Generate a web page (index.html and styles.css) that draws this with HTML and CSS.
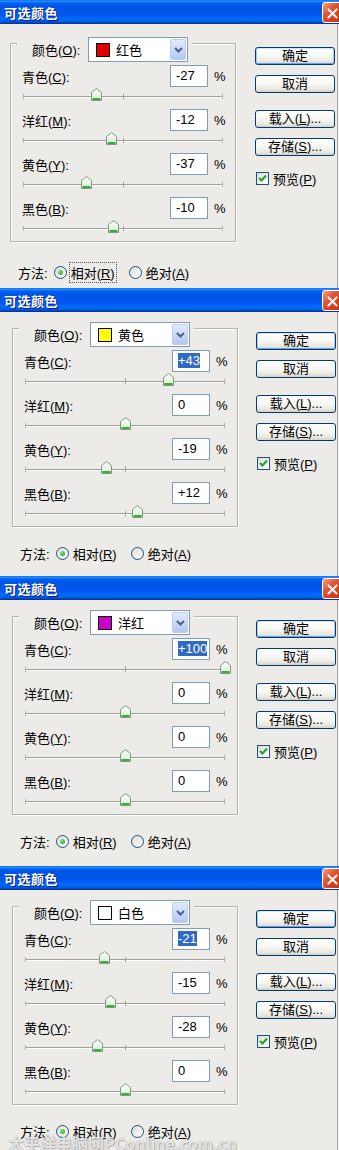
FILE: index.html
```html
<!DOCTYPE html>
<html lang="zh-CN">
<head>
<meta charset="utf-8">
<title>可选颜色</title>
<link rel="stylesheet" href="styles.css">
</head>
<body>
<div class="page">

<section class="dlg dlg-1">
  <div class="titlebar"><span class="title">可选颜色</span><span class="close"><svg width="21" height="21" viewBox="0 0 21 21"><path d="M6 6 L15 15 M15 6 L6 15" stroke="#fff" stroke-width="2.2" stroke-linecap="round"/></svg></span></div>
  <div class="body">
    <div class="left">
      <div class="group">
        <div class="group-head"><span class="head-lbl">颜色(<u>O</u>):</span><div class="select"><span class="swatch swatch-red"></span><span class="sel-text">红色</span><span class="sel-btn"><svg width="9" height="6" viewBox="0 0 9 6"><path d="M1 1 L4.5 4.5 L8 1" fill="none" stroke="#4D6185" stroke-width="2"/></svg></span></div></div>
        <div class="row"><div class="row-top"><span class="lbl">青色(<u>C</u>):</span><span class="num">-27</span><span class="pct">%</span></div><div class="slider"><span class="thumb" style="left:73px"><svg width="11" height="13" viewBox="0 0 11 13"><defs><linearGradient id="tg1" x1="0" y1="0" x2="0" y2="1"><stop offset="0" stop-color="#fff"/><stop offset="1" stop-color="#D5EDD0"/></linearGradient></defs><path d="M0.5 4.5 L5.5 0.5 L10.5 4.5 V12.5 H0.5 Z" fill="url(#tg1)" stroke="#7E9A7E"/><path d="M1.5 11 H9.5" stroke="#3DAA3D" stroke-width="2"/></svg></span></div></div>
        <div class="row"><div class="row-top"><span class="lbl">洋红(<u>M</u>):</span><span class="num">-12</span><span class="pct">%</span></div><div class="slider"><span class="thumb" style="left:88px"><svg width="11" height="13" viewBox="0 0 11 13"><path d="M0.5 4.5 L5.5 0.5 L10.5 4.5 V12.5 H0.5 Z" fill="url(#tg1)" stroke="#7E9A7E"/><path d="M1.5 11 H9.5" stroke="#3DAA3D" stroke-width="2"/></svg></span></div></div>
        <div class="row"><div class="row-top"><span class="lbl">黄色(<u>Y</u>):</span><span class="num">-37</span><span class="pct">%</span></div><div class="slider"><span class="thumb" style="left:63px"><svg width="11" height="13" viewBox="0 0 11 13"><path d="M0.5 4.5 L5.5 0.5 L10.5 4.5 V12.5 H0.5 Z" fill="url(#tg1)" stroke="#7E9A7E"/><path d="M1.5 11 H9.5" stroke="#3DAA3D" stroke-width="2"/></svg></span></div></div>
        <div class="row"><div class="row-top"><span class="lbl">黑色(<u>B</u>):</span><span class="num">-10</span><span class="pct">%</span></div><div class="slider"><span class="thumb" style="left:90px"><svg width="11" height="13" viewBox="0 0 11 13"><path d="M0.5 4.5 L5.5 0.5 L10.5 4.5 V12.5 H0.5 Z" fill="url(#tg1)" stroke="#7E9A7E"/><path d="M1.5 11 H9.5" stroke="#3DAA3D" stroke-width="2"/></svg></span></div></div>
      </div>
      <div class="method"><span class="method-lbl">方法:</span><span class="radio on"></span><span class="radio-text focus">相对(<u>R</u>)</span><span class="radio radio-2"></span><span class="radio-text">绝对(<u>A</u>)</span></div>
    </div>
    <div class="right">
      <div class="btn btn-default">确定</div>
      <div class="btn btn-cancel">取消</div>
      <div class="btn btn-load">载入(<u>L</u>)...</div>
      <div class="btn btn-save">存储(<u>S</u>)...</div>
      <div class="preview"><span class="check"><svg width="11" height="11" viewBox="0 0 11 11"><path d="M2 5 L4.5 7.5 L9 2.5" fill="none" stroke="#21A121" stroke-width="2"/></svg></span><span>预览(<u>P</u>)</span></div>
    </div>
  </div>
</section>

<section class="dlg dlg-2">
  <div class="titlebar"><span class="title">可选颜色</span><span class="close"><svg width="21" height="21" viewBox="0 0 21 21"><path d="M6 6 L15 15 M15 6 L6 15" stroke="#fff" stroke-width="2.2" stroke-linecap="round"/></svg></span></div>
  <div class="body">
    <div class="left">
      <div class="group">
        <div class="group-head"><span class="head-lbl">颜色(<u>O</u>):</span><div class="select"><span class="swatch swatch-yellow"></span><span class="sel-text">黄色</span><span class="sel-btn"><svg width="9" height="6" viewBox="0 0 9 6"><path d="M1 1 L4.5 4.5 L8 1" fill="none" stroke="#4D6185" stroke-width="2"/></svg></span></div></div>
        <div class="row"><div class="row-top"><span class="lbl">青色(<u>C</u>):</span><span class="num"><span class="hl">+43</span></span><span class="pct">%</span></div><div class="slider"><span class="thumb" style="left:143px"><svg width="11" height="13" viewBox="0 0 11 13"><path d="M0.5 4.5 L5.5 0.5 L10.5 4.5 V12.5 H0.5 Z" fill="url(#tg1)" stroke="#7E9A7E"/><path d="M1.5 11 H9.5" stroke="#3DAA3D" stroke-width="2"/></svg></span></div></div>
        <div class="row"><div class="row-top"><span class="lbl">洋红(<u>M</u>):</span><span class="num">0</span><span class="pct">%</span></div><div class="slider"><span class="thumb" style="left:100px"><svg width="11" height="13" viewBox="0 0 11 13"><path d="M0.5 4.5 L5.5 0.5 L10.5 4.5 V12.5 H0.5 Z" fill="url(#tg1)" stroke="#7E9A7E"/><path d="M1.5 11 H9.5" stroke="#3DAA3D" stroke-width="2"/></svg></span></div></div>
        <div class="row"><div class="row-top"><span class="lbl">黄色(<u>Y</u>):</span><span class="num">-19</span><span class="pct">%</span></div><div class="slider"><span class="thumb" style="left:81px"><svg width="11" height="13" viewBox="0 0 11 13"><path d="M0.5 4.5 L5.5 0.5 L10.5 4.5 V12.5 H0.5 Z" fill="url(#tg1)" stroke="#7E9A7E"/><path d="M1.5 11 H9.5" stroke="#3DAA3D" stroke-width="2"/></svg></span></div></div>
        <div class="row"><div class="row-top"><span class="lbl">黑色(<u>B</u>):</span><span class="num">+12</span><span class="pct">%</span></div><div class="slider"><span class="thumb" style="left:112px"><svg width="11" height="13" viewBox="0 0 11 13"><path d="M0.5 4.5 L5.5 0.5 L10.5 4.5 V12.5 H0.5 Z" fill="url(#tg1)" stroke="#7E9A7E"/><path d="M1.5 11 H9.5" stroke="#3DAA3D" stroke-width="2"/></svg></span></div></div>
      </div>
      <div class="method"><span class="method-lbl">方法:</span><span class="radio on"></span><span class="radio-text">相对(<u>R</u>)</span><span class="radio radio-2"></span><span class="radio-text">绝对(<u>A</u>)</span></div>
    </div>
    <div class="right">
      <div class="btn btn-default">确定</div>
      <div class="btn btn-cancel">取消</div>
      <div class="btn btn-load">载入(<u>L</u>)...</div>
      <div class="btn btn-save">存储(<u>S</u>)...</div>
      <div class="preview"><span class="check"><svg width="11" height="11" viewBox="0 0 11 11"><path d="M2 5 L4.5 7.5 L9 2.5" fill="none" stroke="#21A121" stroke-width="2"/></svg></span><span>预览(<u>P</u>)</span></div>
    </div>
  </div>
</section>

<section class="dlg dlg-3">
  <div class="titlebar"><span class="title">可选颜色</span><span class="close"><svg width="21" height="21" viewBox="0 0 21 21"><path d="M6 6 L15 15 M15 6 L6 15" stroke="#fff" stroke-width="2.2" stroke-linecap="round"/></svg></span></div>
  <div class="body">
    <div class="left">
      <div class="group">
        <div class="group-head"><span class="head-lbl">颜色(<u>O</u>):</span><div class="select"><span class="swatch swatch-magenta"></span><span class="sel-text">洋红</span><span class="sel-btn"><svg width="9" height="6" viewBox="0 0 9 6"><path d="M1 1 L4.5 4.5 L8 1" fill="none" stroke="#4D6185" stroke-width="2"/></svg></span></div></div>
        <div class="row"><div class="row-top"><span class="lbl">青色(<u>C</u>):</span><span class="num"><span class="hl">+100</span></span><span class="pct">%</span></div><div class="slider"><span class="thumb" style="left:200px"><svg width="11" height="13" viewBox="0 0 11 13"><path d="M0.5 4.5 L5.5 0.5 L10.5 4.5 V12.5 H0.5 Z" fill="url(#tg1)" stroke="#7E9A7E"/><path d="M1.5 11 H9.5" stroke="#3DAA3D" stroke-width="2"/></svg></span></div></div>
        <div class="row"><div class="row-top"><span class="lbl">洋红(<u>M</u>):</span><span class="num">0</span><span class="pct">%</span></div><div class="slider"><span class="thumb" style="left:100px"><svg width="11" height="13" viewBox="0 0 11 13"><path d="M0.5 4.5 L5.5 0.5 L10.5 4.5 V12.5 H0.5 Z" fill="url(#tg1)" stroke="#7E9A7E"/><path d="M1.5 11 H9.5" stroke="#3DAA3D" stroke-width="2"/></svg></span></div></div>
        <div class="row"><div class="row-top"><span class="lbl">黄色(<u>Y</u>):</span><span class="num">0</span><span class="pct">%</span></div><div class="slider"><span class="thumb" style="left:100px"><svg width="11" height="13" viewBox="0 0 11 13"><path d="M0.5 4.5 L5.5 0.5 L10.5 4.5 V12.5 H0.5 Z" fill="url(#tg1)" stroke="#7E9A7E"/><path d="M1.5 11 H9.5" stroke="#3DAA3D" stroke-width="2"/></svg></span></div></div>
        <div class="row"><div class="row-top"><span class="lbl">黑色(<u>B</u>):</span><span class="num">0</span><span class="pct">%</span></div><div class="slider"><span class="thumb" style="left:100px"><svg width="11" height="13" viewBox="0 0 11 13"><path d="M0.5 4.5 L5.5 0.5 L10.5 4.5 V12.5 H0.5 Z" fill="url(#tg1)" stroke="#7E9A7E"/><path d="M1.5 11 H9.5" stroke="#3DAA3D" stroke-width="2"/></svg></span></div></div>
      </div>
      <div class="method"><span class="method-lbl">方法:</span><span class="radio on"></span><span class="radio-text">相对(<u>R</u>)</span><span class="radio radio-2"></span><span class="radio-text">绝对(<u>A</u>)</span></div>
    </div>
    <div class="right">
      <div class="btn btn-default">确定</div>
      <div class="btn btn-cancel">取消</div>
      <div class="btn btn-load">载入(<u>L</u>)...</div>
      <div class="btn btn-save">存储(<u>S</u>)...</div>
      <div class="preview"><span class="check"><svg width="11" height="11" viewBox="0 0 11 11"><path d="M2 5 L4.5 7.5 L9 2.5" fill="none" stroke="#21A121" stroke-width="2"/></svg></span><span>预览(<u>P</u>)</span></div>
    </div>
  </div>
</section>

<section class="dlg dlg-4">
  <div class="titlebar"><span class="title">可选颜色</span><span class="close"><svg width="21" height="21" viewBox="0 0 21 21"><path d="M6 6 L15 15 M15 6 L6 15" stroke="#fff" stroke-width="2.2" stroke-linecap="round"/></svg></span></div>
  <div class="body">
    <div class="left">
      <div class="group">
        <div class="group-head"><span class="head-lbl">颜色(<u>O</u>):</span><div class="select"><span class="swatch swatch-white"></span><span class="sel-text">白色</span><span class="sel-btn"><svg width="9" height="6" viewBox="0 0 9 6"><path d="M1 1 L4.5 4.5 L8 1" fill="none" stroke="#4D6185" stroke-width="2"/></svg></span></div></div>
        <div class="row"><div class="row-top"><span class="lbl">青色(<u>C</u>):</span><span class="num"><span class="hl">-21</span></span><span class="pct">%</span></div><div class="slider"><span class="thumb" style="left:79px"><svg width="11" height="13" viewBox="0 0 11 13"><path d="M0.5 4.5 L5.5 0.5 L10.5 4.5 V12.5 H0.5 Z" fill="url(#tg1)" stroke="#7E9A7E"/><path d="M1.5 11 H9.5" stroke="#3DAA3D" stroke-width="2"/></svg></span></div></div>
        <div class="row"><div class="row-top"><span class="lbl">洋红(<u>M</u>):</span><span class="num">-15</span><span class="pct">%</span></div><div class="slider"><span class="thumb" style="left:85px"><svg width="11" height="13" viewBox="0 0 11 13"><path d="M0.5 4.5 L5.5 0.5 L10.5 4.5 V12.5 H0.5 Z" fill="url(#tg1)" stroke="#7E9A7E"/><path d="M1.5 11 H9.5" stroke="#3DAA3D" stroke-width="2"/></svg></span></div></div>
        <div class="row"><div class="row-top"><span class="lbl">黄色(<u>Y</u>):</span><span class="num">-28</span><span class="pct">%</span></div><div class="slider"><span class="thumb" style="left:72px"><svg width="11" height="13" viewBox="0 0 11 13"><path d="M0.5 4.5 L5.5 0.5 L10.5 4.5 V12.5 H0.5 Z" fill="url(#tg1)" stroke="#7E9A7E"/><path d="M1.5 11 H9.5" stroke="#3DAA3D" stroke-width="2"/></svg></span></div></div>
        <div class="row"><div class="row-top"><span class="lbl">黑色(<u>B</u>):</span><span class="num">0</span><span class="pct">%</span></div><div class="slider"><span class="thumb" style="left:100px"><svg width="11" height="13" viewBox="0 0 11 13"><path d="M0.5 4.5 L5.5 0.5 L10.5 4.5 V12.5 H0.5 Z" fill="url(#tg1)" stroke="#7E9A7E"/><path d="M1.5 11 H9.5" stroke="#3DAA3D" stroke-width="2"/></svg></span></div></div>
      </div>
      <div class="method"><span class="method-lbl">方法:</span><span class="radio on"></span><span class="radio-text">相对(<u>R</u>)</span><span class="radio radio-2"></span><span class="radio-text">绝对(<u>A</u>)</span></div>
    </div>
    <div class="right">
      <div class="btn btn-default">确定</div>
      <div class="btn btn-cancel">取消</div>
      <div class="btn btn-load">载入(<u>L</u>)...</div>
      <div class="btn btn-save">存储(<u>S</u>)...</div>
      <div class="preview"><span class="check"><svg width="11" height="11" viewBox="0 0 11 11"><path d="M2 5 L4.5 7.5 L9 2.5" fill="none" stroke="#21A121" stroke-width="2"/></svg></span><span>预览(<u>P</u>)</span></div>
    </div>
  </div>
</section>

<div class="watermark">太平洋电脑网PConline.com.cn</div>
</div>
</body>
</html>
```

FILE: styles.css
```css
html, body {
  margin: 0;
  padding: 0;
  background: #ECEBE7;
}
body {
  font-family: "Liberation Sans", "Noto Sans CJK SC", sans-serif;
  font-size: 13px;
  color: #000;
}
u { text-decoration: underline; text-underline-offset: 1px; }

.page {
  width: 339px;
  position: relative;
  overflow: hidden;
}

.dlg {
  height: 288px;
  background: #ECEBE7;
  box-shadow: inset -1px 0 0 #F6F6F4, inset -2px 0 0 #A2A09A;
  overflow: hidden;
}
.dlg-3 { height: 290px; }
.dlg-4 { height: 284px; }

.titlebar {
  height: 24px;
  display: flex;
  align-items: center;
  padding-left: 4px;
  background: linear-gradient(#0058EE 0%, #3593FF 4%, #288EFF 6%, #127DFF 8%, #036FFC 10%, #0262EE 14%, #0057E5 20%, #0054E3 24%, #0055EB 56%, #005BF5 66%, #026AFE 76%, #0062EF 86%, #0052D6 92%, #0040AB 96%, #003092 100%);
}
.title {
  font-family: "Noto Sans CJK SC", sans-serif;
  font-weight: bold;
  font-size: 13px;
  color: #fff;
  text-shadow: 1px 1px 0 #0A1883;
  letter-spacing: 0.5px;
}
.close {
  margin-left: auto;
  margin-right: -4px;
  width: 21px;
  height: 21px;
  box-sizing: border-box;
  border: 1px solid #fff;
  border-radius: 3px;
  background: linear-gradient(135deg, #F0A48C 0%, #E2593A 35%, #D13D1E 70%, #C43216 100%);
  display: flex;
}

.body {
  display: flex;
  padding-left: 10px;
}
.dlg-2 .body, .dlg-3 .body, .dlg-4 .body { padding-left: 12px; }

.left {
  width: 226px;
}

.group {
  margin-top: 19px;
  width: 226px;
  box-sizing: border-box;
  border: 1px solid #B5B2A8;
  box-shadow: 1px 1px 0 #fff, inset 1px 1px 0 #fff;
}
.dlg-2 .group, .dlg-3 .group, .dlg-4 .group { margin-top: 16px; }

.group-head {
  display: flex;
  align-items: center;
  margin: -7px 0 3px 6px;
  padding: 0 4px 0 15px;
  width: max-content;
  background: #ECEBE7;
}
.head-lbl { width: 56px; }

.select {
  width: 100px;
  height: 25px;
  box-sizing: border-box;
  border: 1px solid #7F9DB9;
  background: #fff;
  display: flex;
  align-items: center;
  padding: 0 1px 0 7px;
}
.swatch {
  width: 14px;
  height: 14px;
  box-sizing: border-box;
  border: 1px solid #000;
}
.swatch-red { background: #E00000; }
.swatch-yellow { background: #FFFF00; }
.swatch-magenta { background: #CC00CC; }
.swatch-white { background: #fff; }
.sel-text { margin-left: 6px; }
.sel-btn {
  margin-left: auto;
  width: 16px;
  height: 21px;
  box-sizing: border-box;
  border: 1px solid #BCCDF3;
  border-radius: 2px;
  background: linear-gradient(#E1EAFE, #C6D6FB 60%, #B4C8F6);
  display: flex;
  align-items: center;
  justify-content: center;
}

.row { height: 44px; }
.row-top {
  display: grid;
  grid-template-columns: 148px 38px 22px;
  align-items: center;
  padding-left: 11px;
  height: 22px;
}
.num {
  height: 22px;
  box-sizing: border-box;
  border: 1px solid #7F9DB9;
  background: #fff;
  padding-left: 5px;
  line-height: 20px;
  white-space: nowrap;
  overflow: hidden;
}
.hl {
  background: #316AC5;
  color: #fff;
}
.pct { padding-left: 6px; }

.slider {
  position: relative;
  height: 22px;
  width: 200px;
  margin-left: 12px;
}
.slider::before {
  content: "";
  position: absolute;
  left: 1px;
  right: 1px;
  top: 9px;
  height: 1px;
  background: #A09F9A;
  border-bottom: 1px solid #fff;
}
.slider::after {
  content: "";
  position: absolute;
  left: 0;
  right: 0;
  top: 7px;
  height: 5px;
  box-sizing: border-box;
  border-left: 1px solid #B0AEA8;
  border-right: 1px solid #B0AEA8;
  background: linear-gradient(#A09F9A, #A09F9A) center / 1px 100% no-repeat;
}
.thumb {
  position: absolute;
  top: 1px;
  width: 11px;
  height: 13px;
  margin-left: -5px;
  z-index: 1;
  display: flex;
}

.method {
  display: flex;
  align-items: center;
  height: 17px;
  margin-top: 22px;
  padding-left: 8px;
}
.dlg-2 .method, .dlg-3 .method, .dlg-4 .method { margin-top: 18px; }
.method-lbl { margin-right: 6px; }
.radio {
  width: 13px;
  height: 13px;
  box-sizing: border-box;
  border: 1px solid #1C5180;
  border-radius: 50%;
  background: linear-gradient(135deg, #DCDCD7, #fff);
  display: flex;
  align-items: center;
  justify-content: center;
}
.radio.on::after {
  content: "";
  width: 5px;
  height: 5px;
  border-radius: 50%;
  background: radial-gradient(circle at 35% 35%, #7CE07C, #21A121);
}
.radio-2 { margin-left: 12px; }
.radio-text { margin-left: 2px; padding: 0 1px; border: 1px dotted transparent; }
.radio-text.focus { border-color: #555; }

.right {
  margin-left: 19px;
  width: 80px;
  padding-top: 23px;
  display: flex;
  flex-direction: column;
}
.dlg-2 .right, .dlg-3 .right, .dlg-4 .right { padding-top: 20px; margin-left: 18px; }

.btn {
  height: 18px;
  box-sizing: border-box;
  border: 1px solid #003C74;
  border-radius: 3px;
  background: linear-gradient(#FFFFFF, #F5F5F1 55%, #E6E5DE 85%, #D6D0C5);
  text-align: center;
  line-height: 16px;
}
.btn-default { box-shadow: inset 0 1px 0 #CEE7FF, inset 1px 0 0 #A6C8F5, inset -1px 0 0 #A6C8F5, inset 0 -1px 0 #699EEF; }
.btn-cancel { margin-top: 10px; }
.btn-load { margin-top: 17px; }
.btn-save { margin-top: 10px; }

.preview {
  display: flex;
  align-items: center;
  margin-top: 15px;
  margin-left: 1px;
  height: 14px;
}
.check {
  width: 13px;
  height: 13px;
  box-sizing: border-box;
  border: 1px solid #1C5180;
  background: linear-gradient(135deg, #DCDCD7, #fff);
  display: flex;
  align-items: center;
  justify-content: center;
  margin-right: 4px;
}

.watermark {
  position: absolute;
  left: 8px;
  bottom: -5px;
  font-family: "Noto Sans CJK SC", sans-serif;
  font-weight: bold;
  font-size: 16px;
  color: rgba(255, 255, 255, 0.75);
  text-shadow: 0 0 1px rgba(90, 90, 90, 0.6), 1px 1px 1px rgba(120, 120, 120, 0.4);
  white-space: nowrap;
}
```
